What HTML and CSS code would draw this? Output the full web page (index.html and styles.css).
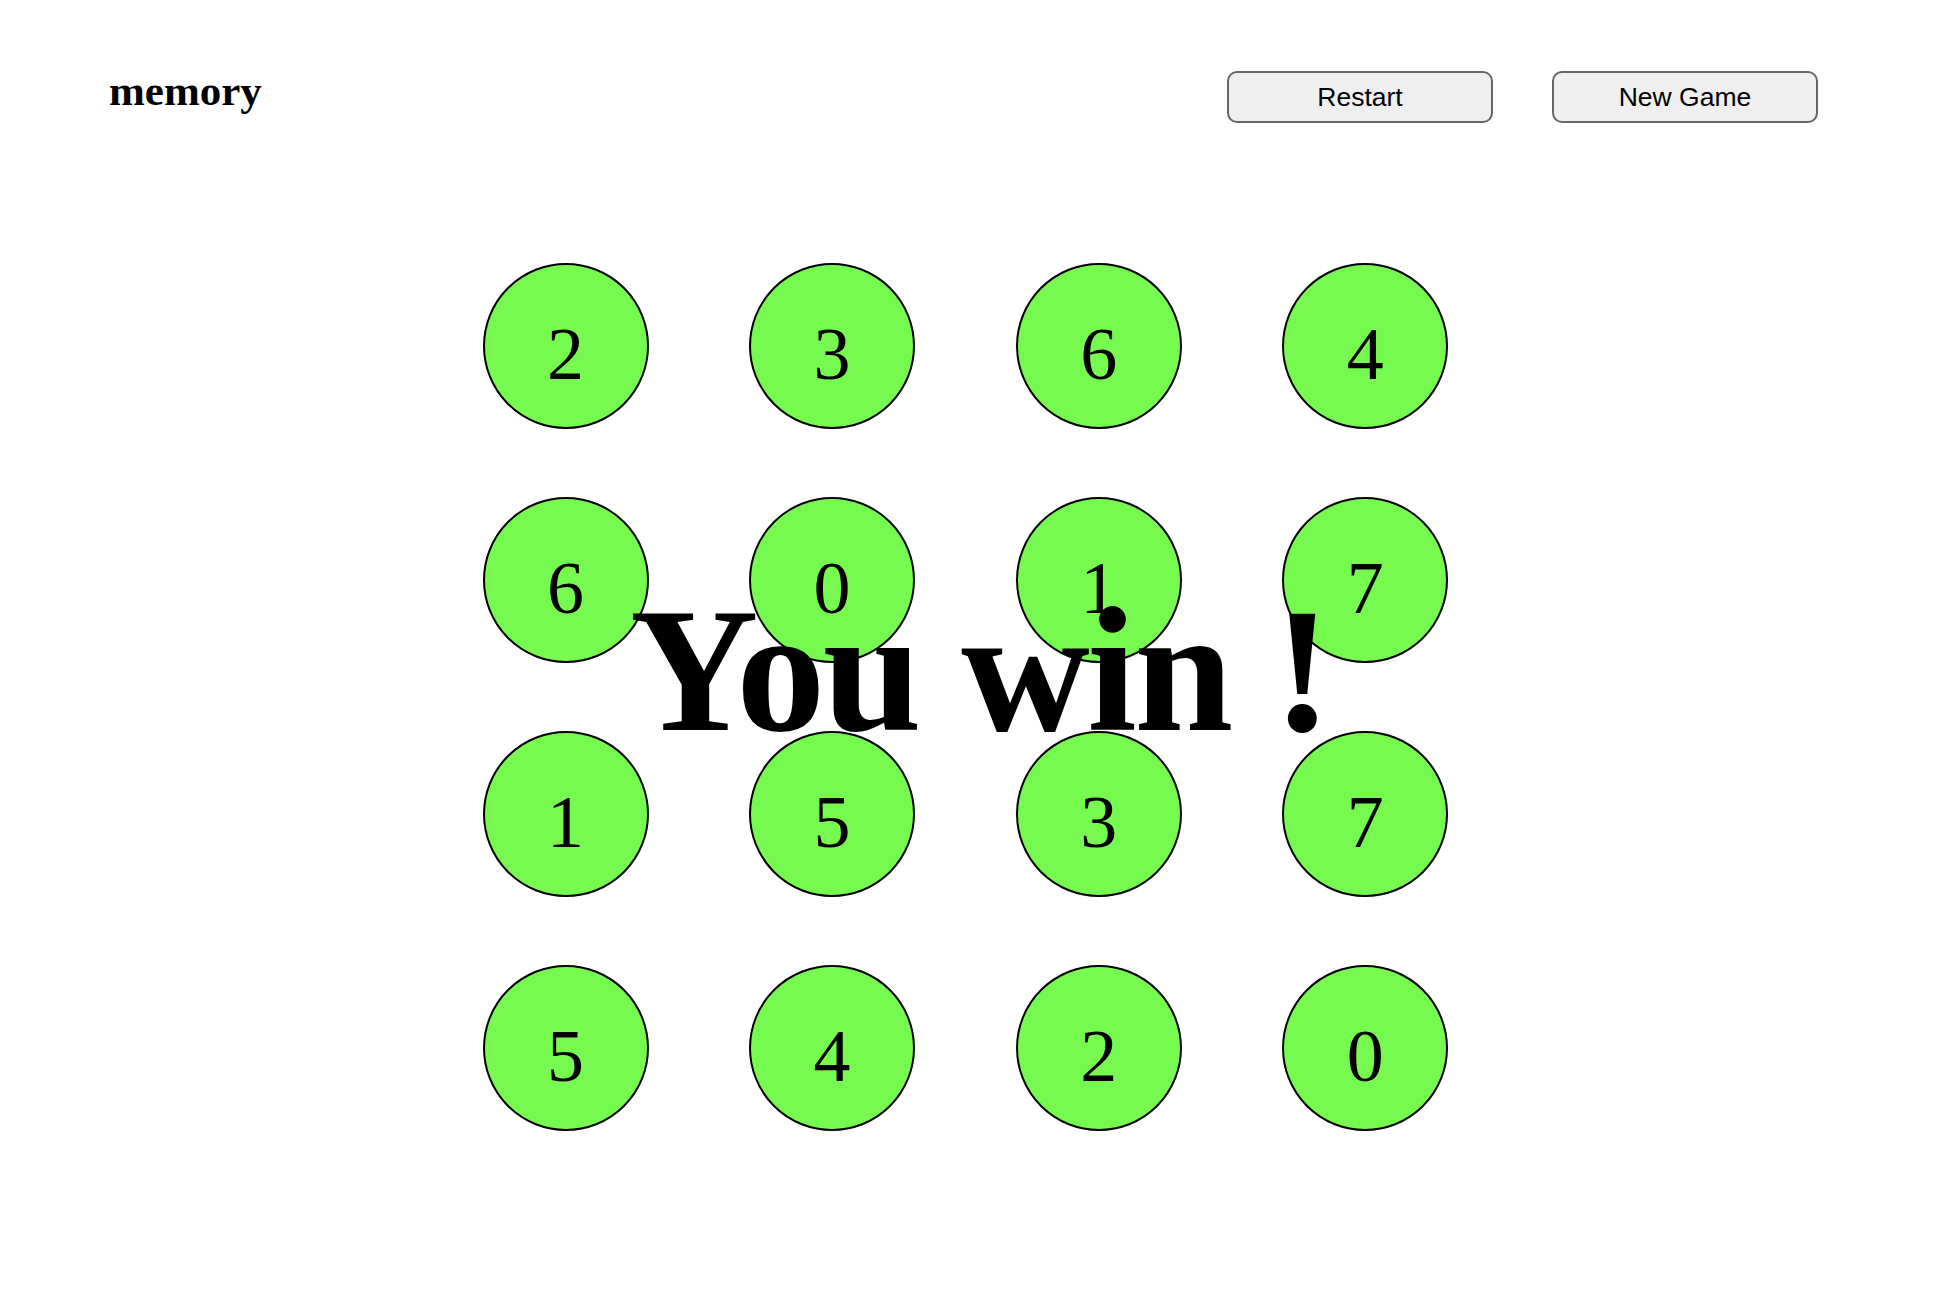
FILE: index.html
```html
<!DOCTYPE html>
<html lang="en">
<head>
<meta charset="utf-8">
<title>memory</title>
<link rel="stylesheet" href="styles.css">
</head>
<body>
<header class="topbar">
  <h1 class="title">memory</h1>
  <div class="actions">
    <button class="btn" type="button">Restart</button>
    <button class="btn" type="button">New Game</button>
  </div>
</header>
<main class="board">
  <div class="grid">
    <div class="cell">2</div>
    <div class="cell">3</div>
    <div class="cell">6</div>
    <div class="cell">4</div>
    <div class="cell">6</div>
    <div class="cell">0</div>
    <div class="cell">1</div>
    <div class="cell">7</div>
    <div class="cell">1</div>
    <div class="cell">5</div>
    <div class="cell">3</div>
    <div class="cell">7</div>
    <div class="cell">5</div>
    <div class="cell">4</div>
    <div class="cell">2</div>
    <div class="cell">0</div>
  </div>
  <div class="win">You win !</div>
</main>
</body>
</html>
```
FILE: styles.css
```css
html, body {
  margin: 0;
  padding: 0;
  background: #ffffff;
}

body {
  font-family: "Liberation Serif", "Times New Roman", serif;
  color: #000;
  position: relative;
  min-height: 1298px;
}

.topbar {
  display: flex;
  align-items: flex-start;
  padding: 71px 134px 0 109px;
}

.title {
  margin: -1px 0 0 0;
  font-size: 43px;
  line-height: 42px;
  font-weight: bold;
}

.actions {
  margin-left: auto;
  display: flex;
  gap: 59px;
}

.btn {
  box-sizing: border-box;
  width: 266px;
  height: 52px;
  padding: 0;
  font-family: "Liberation Sans", Arial, sans-serif;
  font-size: 26.5px;
  color: #000;
  background: #efefef;
  border: 2px solid #666666;
  border-radius: 10px;
}

.board {
  padding: 140px 0 0 482.5px;
}

.grid {
  display: grid;
  grid-template-columns: repeat(4, 166px);
  column-gap: 100.6px;
  row-gap: 68px;
}

.cell {
  box-sizing: border-box;
  width: 166px;
  height: 166px;
  border: 2.5px solid #000;
  border-radius: 50%;
  background: #77fa4f;
  text-align: center;
  font-size: 74px;
  line-height: 144px;
  padding-top: 17px;
}

.win {
  position: absolute;
  left: 630px;
  top: 581px;
  font-size: 178px;
  line-height: 178px;
  font-weight: bold;
  letter-spacing: -2.5px;
  white-space: nowrap;
}
```
